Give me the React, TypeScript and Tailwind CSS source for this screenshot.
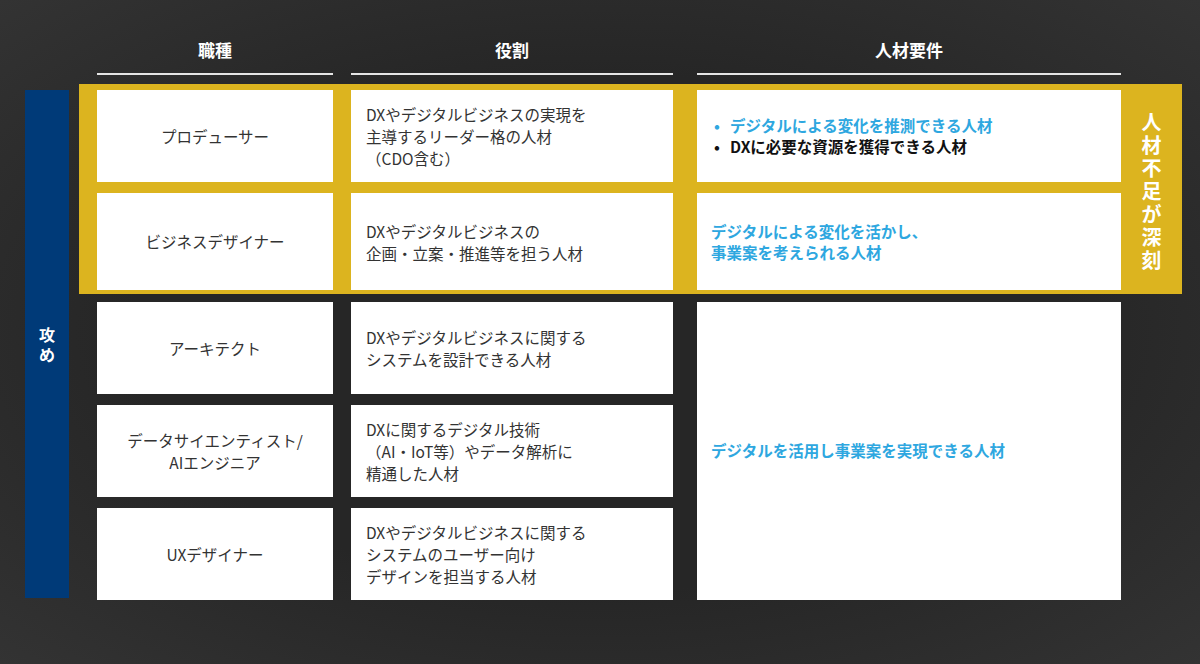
const font = { fontFamily: '"Noto Sans CJK JP", "Noto Sans", sans-serif' };

function Cell({ w, children, center }: { w: string; children: React.ReactNode; center?: boolean }) {
  return (
    <div
      className={`${w} h-[92px] bg-white flex items-center text-[15.5px] leading-[22px] text-[#333] ${
        center ? "justify-center text-center" : "pl-[15px]"
      }`}
    >
      <div>{children}</div>
    </div>
  );
}

function Row({ job, role, req, h }: { job: React.ReactNode; role: React.ReactNode; req?: React.ReactNode; h?: string }) {
  return (
    <div className={`flex ${h ?? ""}`}>
      <Cell w="w-[236px]" center>{job}</Cell>
      <div className="w-[18px]" />
      <Cell w="w-[322px]">{role}</Cell>
      <div className="w-[24px]" />
      {req !== undefined && (
        <div className="w-[424px] h-[92px] bg-white flex items-center pl-[15px] text-[15.5px] leading-[21px] font-bold">
          <div>{req}</div>
        </div>
      )}
    </div>
  );
}

export default function App() {
  return (
    <div
      style={font}
      className="w-[1200px] h-[664px] bg-[radial-gradient(ellipse_at_center,#262626_0%,#262626_55%,#333333_100%)] flex flex-col"
    >
      <div className="h-[84px] flex items-end pl-[97px] pb-[9px]">
        {[
          ["w-[236px]", "職種", ""],
          ["w-[322px]", "役割", "ml-[18px]"],
          ["w-[424px]", "人材要件", "ml-[24px]"],
        ].map(([w, t, m]) => (
          <div key={t} className={`${w} ${m} flex flex-col items-center`}>
            <div className="text-white font-bold text-[17px] leading-[24px] mb-[11px]">{t}</div>
            <div className="w-full h-[2px] bg-[#e5e5e5]" />
          </div>
        ))}
      </div>
      <div className="flex">
        <div className="ml-[25px] mt-[6px] w-[44px] h-[508px] bg-[#003a78] flex items-center justify-center">
          <div className="text-white font-bold text-[16px] leading-[20px] w-[16px] text-center">攻め</div>
        </div>
        <div className="ml-[10px] flex flex-col">
          <div className="w-[1103px] bg-[#dcb41f] pt-[6px] pb-[4px] pl-[18px] flex">
            <div className="flex flex-col gap-[11px]">
              <Row
                job="プロデューサー"
                role={<>DXやデジタルビジネスの実現を<br />主導するリーダー格の人材<br />（CDO含む）</>}
                req={
                  <>
                    <div className="text-[#2ea7e0]"><span className="inline-block w-[18px] pl-[2px]">•</span>デジタルによる変化を推測できる人材</div>
                    <div className="text-[#111]"><span className="inline-block w-[18px] pl-[2px]">•</span>DXに必要な資源を獲得できる人材</div>
                  </>
                }
              />
              <div className="h-[97px] flex">
                <div className="flex">
                  <div className="w-[236px] bg-white flex items-center justify-center text-[15.5px] text-[#333]">ビジネスデザイナー</div>
                  <div className="w-[18px]" />
                  <div className="w-[322px] bg-white flex items-center pl-[15px] text-[15.5px] leading-[22px] text-[#333]">
                    <div>DXやデジタルビジネスの<br />企画・立案・推進等を担う人材</div>
                  </div>
                  <div className="w-[24px]" />
                  <div className="w-[424px] bg-white flex items-center pl-[14px] text-[15.5px] leading-[21px] font-bold text-[#2ea7e0]">
                    <div>デジタルによる変化を活かし、<br />事業案を考えられる人材</div>
                  </div>
                </div>
              </div>
            </div>
            <div className="flex-1 flex items-center justify-center">
              <div className="text-white font-bold text-[20px] leading-[23px] w-[20px] text-center">人材不足が深刻</div>
            </div>
          </div>
          <div className="ml-[18px] mt-[8px] flex">
            <div className="flex flex-col gap-[11px]">
              <Row job="アーキテクト" role={<>DXやデジタルビジネスに関する<br />システムを設計できる人材</>} />
              <Row job={<>データサイエンティスト/<br />AIエンジニア</>} role={<>DXに関するデジタル技術<br />（AI・IoT等）やデータ解析に<br />精通した人材</>} />
              <Row job="UXデザイナー" role={<>DXやデジタルビジネスに関する<br />システムのユーザー向け<br />デザインを担当する人材</>} />
            </div>
            <div className="w-[424px] h-[298px] bg-white flex items-center pl-[14px] text-[15.5px] font-bold text-[#2ea7e0]">
              デジタルを活用し事業案を実現できる人材
            </div>
          </div>
        </div>
      </div>
    </div>
  );
}
